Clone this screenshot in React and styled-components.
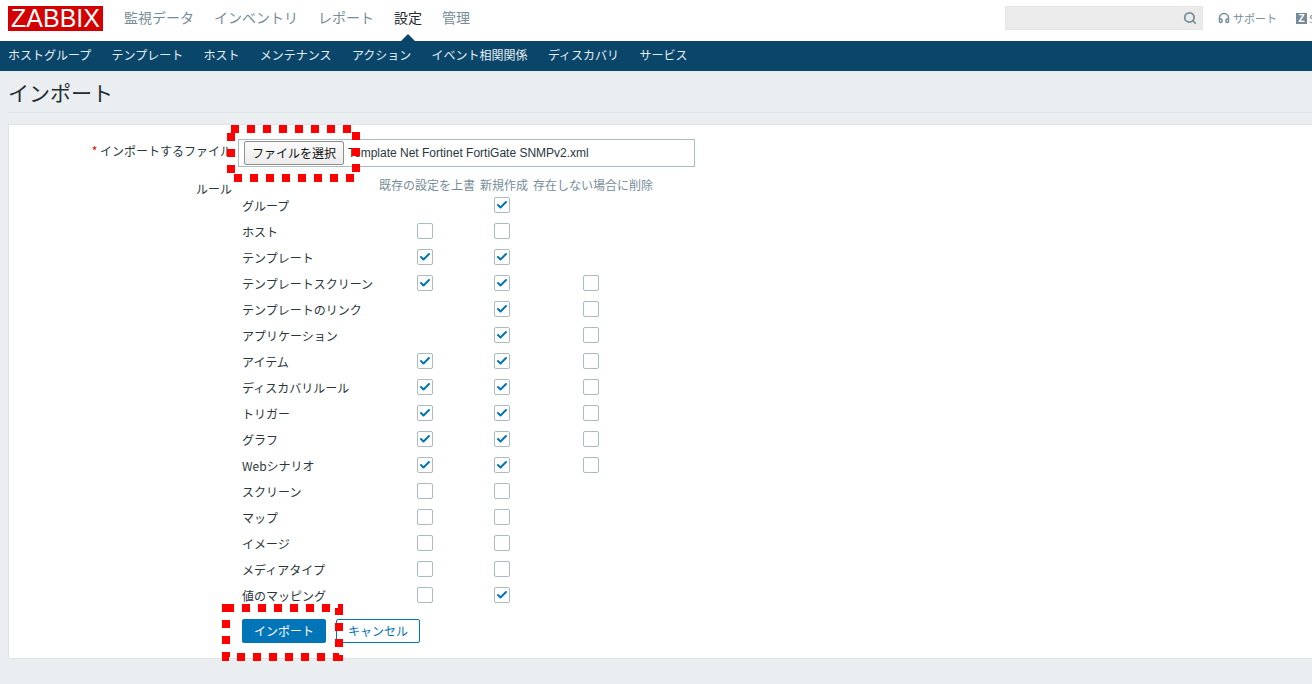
import React from "react";
import styled, { createGlobalStyle } from "styled-components";
import { Search, Headphones, Check } from "lucide-react";

const mainMenu = [
  { label: "監視データ" },
  { label: "インベントリ" },
  { label: "レポート" },
  { label: "設定", active: true },
  { label: "管理" },
];

const subMenu = [
  "ホストグループ",
  "テンプレート",
  "ホスト",
  "メンテナンス",
  "アクション",
  "イベント相関関係",
  "ディスカバリ",
  "サービス",
];

// 1 = checked, 0 = unchecked, null = no checkbox in this column
const rules = [
  ["グループ", null, 1, null],
  ["ホスト", 0, 0, null],
  ["テンプレート", 1, 1, null],
  ["テンプレートスクリーン", 1, 1, 0],
  ["テンプレートのリンク", null, 1, 0],
  ["アプリケーション", null, 1, 0],
  ["アイテム", 1, 1, 0],
  ["ディスカバリルール", 1, 1, 0],
  ["トリガー", 1, 1, 0],
  ["グラフ", 1, 1, 0],
  ["Webシナリオ", 1, 1, 0],
  ["スクリーン", 0, 0, null],
  ["マップ", 0, 0, null],
  ["イメージ", 0, 0, null],
  ["メディアタイプ", 0, 0, null],
  ["値のマッピング", 0, 1, null],
];

const Box = ({ checked }) => (
  <CheckBox>{checked ? <Check size={12} strokeWidth={4} /> : null}</CheckBox>
);

const App = () => (
  <>
    <GlobalStyle />
    <TopBar>
      <Logo>ZABBIX</Logo>
      <MainNav>
        {mainMenu.map((item) => (
          <MainLink key={item.label} $active={item.active}>
            {item.label}
          </MainLink>
        ))}
      </MainNav>
      <SearchBox>
        <Search size={14} strokeWidth={3} />
      </SearchBox>
      <Support>
        <Headphones size={12} strokeWidth={3} />
        サポート
      </Support>
      <Share>
        <ZIcon>Z</ZIcon>
        Share
      </Share>
    </TopBar>

    <SubNav>
      {subMenu.map((label) => (
        <SubLink key={label}>{label}</SubLink>
      ))}
    </SubNav>

    <TitleBar>
      <Title>インポート</Title>
    </TitleBar>

    <Panel>
      <FormRow>
        <Label>
          <Required>*</Required> インポートするファイル
        </Label>
        <FileField>
          <FileButton>ファイルを選択</FileButton>
          <FileName>Template Net Fortinet FortiGate SNMPv2.xml</FileName>
        </FileField>
      </FormRow>

      <RulesRow>
        <RulesLabel>ルール</RulesLabel>
        <RulesTable>
          <span />
          <HeadCell>既存の設定を上書</HeadCell>
          <HeadCell $indent={9}>新規作成</HeadCell>
          <HeadCell>存在しない場合に削除</HeadCell>
          {rules.map(([name, a, b, c]) => (
            <React.Fragment key={name}>
              <RuleName>{name}</RuleName>
              <BoxCell>{a !== null && <Box checked={a} />}</BoxCell>
              <BoxCell>{b !== null && <Box checked={b} />}</BoxCell>
              <BoxCell>{c !== null && <Box checked={c} />}</BoxCell>
            </React.Fragment>
          ))}
        </RulesTable>
      </RulesRow>

      <Actions>
        <PrimaryButton>インポート</PrimaryButton>
        <OutlineButton>キャンセル</OutlineButton>
      </Actions>

      <DotMark $left={218} $top={0} $width={133} $height={57} viewBox="0 0 133 57">
        <rect x="4" y="4" width="125" height="49" />
      </DotMark>
      <DotMark $left={213} $top={479} $width={121} $height={57} viewBox="0 0 121 57">
        <rect x="4" y="4" width="113" height="49" />
      </DotMark>
    </Panel>
  </>
);

export default App;

const GlobalStyle = createGlobalStyle`
  html, body {
    margin: 0;
    height: 100%;
    overflow: hidden;
    background: #ebeef0;
    font-family: "Noto Sans CJK JP", "Liberation Sans", sans-serif;
    font-size: 12px;
    color: #2b373e;
  }
`;

const TopBar = styled.header`
  width: 1352px;
  height: 41px;
  box-sizing: border-box;
  padding-left: 8px;
  background: #fff;
  display: flex;
  align-items: center;
`;

const Logo = styled.div`
  width: 95px;
  height: 25px;
  margin-bottom: 5px;
  background: #d40000;
  color: #fff;
  font-family: "Liberation Sans", sans-serif;
  font-size: 25px;
  line-height: 25px;
  text-align: center;
`;

const MainNav = styled.nav`
  display: flex;
  gap: 20px;
  margin-left: 21px;
  margin-bottom: 7px;
`;

const MainLink = styled.span`
  position: relative;
  font-size: 14px;
  line-height: 24px;
  color: ${(p) => (p.$active ? "#1f2c33" : "#768d99")};

  ${(p) =>
    p.$active &&
    `&::after {
      content: "";
      position: absolute;
      left: 50%;
      bottom: -13px;
      margin-left: -8px;
      border: 8px solid transparent;
      border-top: 0;
      border-bottom-color: #0a466a;
    }`}
`;

const SearchBox = styled.div`
  margin-left: 535px;
  margin-bottom: 5px;
  width: 198px;
  height: 24px;
  box-sizing: border-box;
  padding-right: 5px;
  background: #ebebeb;
  border: 1px solid #e6e6e6;
  display: flex;
  align-items: center;
  justify-content: flex-end;
  color: #768d99;
`;

const Support = styled.span`
  margin-left: 15px;
  margin-bottom: 5px;
  display: flex;
  align-items: center;
  gap: 3px;
  color: #768d99;
  font-size: 11px;
  svg {
    flex-shrink: 0;
  }
`;

const Share = styled.span`
  margin-left: 19px;
  margin-bottom: 5px;
  display: flex;
  align-items: center;
  gap: 2px;
  color: #768d99;
  font-size: 11px;
`;

const ZIcon = styled.span`
  width: 11px;
  height: 11px;
  background: #768d99;
  color: #fff;
  font-family: "Liberation Sans", sans-serif;
  font-size: 10px;
  font-weight: 700;
  line-height: 11px;
  text-align: center;
`;

const SubNav = styled.nav`
  height: 30px;
  box-sizing: border-box;
  padding: 0 0 3px 8px;
  background: #0a466a;
  display: flex;
  align-items: center;
  gap: 20.3px;
`;

const SubLink = styled.span`
  color: #e6eef3;
  font-size: 12px;
  white-space: nowrap;
`;

const TitleBar = styled.div`
  height: 41px;
  margin: 0 0 11px 8px;
  border-bottom: 1px solid #dfe4e7;
  display: flex;
  align-items: center;
`;

const Title = styled.h1`
  margin: 2px 0 0;
  font-size: 21px;
  font-weight: 400;
  line-height: 39px;
  color: #1f2c33;
`;

const Panel = styled.main`
  position: relative;
  margin-left: 8px;
  height: 535px;
  box-sizing: border-box;
  padding-top: 14px;
  background: #fff;
  border: 1px solid #dfe4e7;
  border-right: 0;
`;

const FormRow = styled.div`
  display: flex;
  align-items: flex-start;
  height: 28px;
`;

const Label = styled.label`
  width: 223px;
  flex-shrink: 0;
  text-align: right;
  white-space: nowrap;
  line-height: 24px;
`;

const Required = styled.span`
  color: #dc0000;
`;

const FileField = styled.div`
  width: 457px;
  height: 28px;
  margin-left: 6px;
  box-sizing: border-box;
  padding-left: 5px;
  border: 1px solid #acbbc2;
  display: flex;
  align-items: center;
  gap: 4px;
`;

const FileButton = styled.button`
  width: 100px;
  height: 24px;
  padding: 0 0 2px;
  background: linear-gradient(#fbfbfb, #ececec);
  border: 1px solid #8f8f8f;
  border-radius: 2px;
  font-family: inherit;
  font-size: 12px;
  color: #111;
`;

const FileName = styled.span`
  font-family: "Liberation Sans", sans-serif;
  font-size: 12px;
  white-space: nowrap;
`;

const RulesRow = styled.div`
  display: flex;
  align-items: flex-start;
  margin-top: 10px;
`;

const RulesLabel = styled.span`
  width: 223px;
  flex-shrink: 0;
  padding-top: 3px;
  text-align: right;
  line-height: 18px;
`;

const RulesTable = styled.div`
  margin-left: 10px;
  display: grid;
  grid-template-columns: 137px 92px 62px 116px;
  grid-template-rows: 15px repeat(16, 26px);
`;

const HeadCell = styled.span`
  padding-left: ${(p) => p.$indent || 0}px;
  line-height: 16px;
  color: #768d99;
  white-space: nowrap;
`;

const RuleName = styled.span`
  padding-top: 1px;
  line-height: 25px;
  white-space: nowrap;
`;

const BoxCell = styled.span`
  display: flex;
  align-items: center;
  justify-content: center;
`;

const CheckBox = styled.span`
  width: 16px;
  height: 16px;
  box-sizing: border-box;
  border: 1px solid #acbbc2;
  border-radius: 2px;
  background: #fff;
  color: #0275b8;
  display: flex;
  align-items: center;
  justify-content: center;
`;

const Actions = styled.div`
  display: flex;
  gap: 10px;
  margin: 11px 0 0 233px;
`;

const PrimaryButton = styled.button`
  width: 84px;
  height: 24px;
  padding: 0 0 2px;
  background: #0275b8;
  border: 1px solid #0275b8;
  border-radius: 2px;
  color: #fff;
  font-family: inherit;
  font-size: 12px;
`;

const OutlineButton = styled(PrimaryButton)`
  background: #fff;
  color: #0275b8;
`;

const DotMark = styled.svg`
  position: absolute;
  left: ${(p) => p.$left}px;
  top: ${(p) => p.$top}px;
  width: ${(p) => p.$width}px;
  height: ${(p) => p.$height}px;

  rect {
    fill: none;
    stroke: #ff0000;
    stroke-width: 8;
    stroke-dasharray: 8 8;
  }
`;
